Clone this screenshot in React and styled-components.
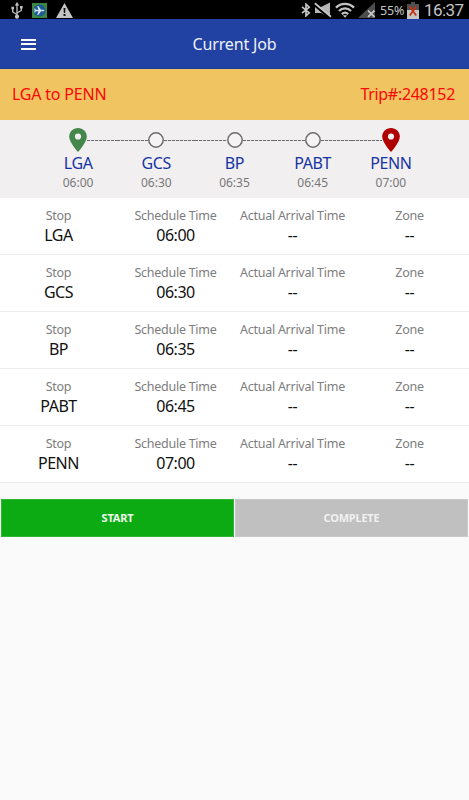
import styled, { createGlobalStyle } from "styled-components";

const GlobalStyle = createGlobalStyle`
  * {
    box-sizing: border-box;
  }
  body {
    margin: 0;
    background-color: #fafafa;
    font-family: "Noto Sans", "Open Sans", sans-serif;
  }
`;

const Screen = styled.div`
  width: 100%;
  min-height: 800px;
  background-color: #fafafa;
`;

const StatusBar = styled.div`
  display: flex;
  justify-content: space-between;
  height: 19px;
  background-color: black;
  color: #c4c4c4;
`;

const StatusGroup = styled.div`
  display: flex;
  align-items: center;
  padding: ${props => props.$padding};
  gap: ${props => props.$gap || "0"};

  svg {
    display: block;
    flex: none;
  }
`;

const Battery = styled.span`
  width: 27px;
  font-size: 12.5px;
  line-height: 19px;
  letter-spacing: -0.1px;
  white-space: nowrap;
`;

const Clock = styled.span`
  width: 41px;
  margin-left: 5px;
  font-family: Roboto, sans-serif;
  font-size: 17px;
  line-height: 19px;
  letter-spacing: -0.6px;
  white-space: nowrap;
`;

const Header = styled.header`
  display: grid;
  grid-template-columns: 56px 1fr 56px;
  align-items: center;
  height: 50px;
  background-color: #2142a2;
  border-bottom: 1px solid #1b3996;
`;

const MenuBtn = styled.button`
  display: flex;
  flex-direction: column;
  gap: 2.5px;
  width: 15px;
  margin-left: 21px;
  padding: 1px 0 0;
  border: none;
  background: none;
`;

const MenuLine = styled.span`
  height: 2px;
  background-color: white;
`;

const Title = styled.h1`
  margin: 0;
  color: #eef1fa;
  font-size: 16px;
  font-weight: 400;
  line-height: 20px;
  letter-spacing: -0.15px;
  text-align: center;
`;

const TripBar = styled.div`
  display: flex;
  align-items: center;
  justify-content: space-between;
  height: 51px;
  padding: 0 14px 1px 12px;
  background-color: #f0c561;
  color: #fb0707;
  font-size: 16px;
  line-height: 20px;
`;

const TripText = styled.span`
  letter-spacing: ${props => props.$spacing};
`;

const Timeline = styled.div`
  display: grid;
  grid-template-columns: repeat(5, 1fr);
  height: 78px;
  padding: 7px 39px 0;
  background-color: #f2eff1;
`;

const Station = styled.div`
  display: flex;
  flex-direction: column;
  align-items: center;
`;

const Track = styled.div`
  display: flex;
  align-items: center;
  justify-content: center;
  width: 100%;
  height: 26px;

  svg {
    display: block;
    flex: none;
  }
`;

const Dashes = styled.span`
  flex: 1;
  height: 1px;
  background: ${props => props.$hidden ? "none" : "repeating-linear-gradient(to right, #6c6c6c 0 3px, #dcdadb 3px 4px)"};
`;

const StationName = styled.span`
  color: #1434a4;
  font-size: 16px;
  line-height: 20px;
  letter-spacing: -0.4px;
`;

const StationTime = styled.span`
  margin-top: 1px;
  color: #777;
  font-size: 12px;
  line-height: 17px;
`;

const StopRow = styled.div`
  display: grid;
  grid-template-columns: repeat(4, 1fr);
  height: 57px;
  padding: 9px 1px 0 0;
  background-color: white;
  border-bottom: 1px solid #ebebeb;
`;

const Cell = styled.div`
  display: flex;
  flex-direction: column;
  align-items: center;
  white-space: nowrap;
`;

const Label = styled.span`
  color: #7d7d7d;
  font-size: 12.5px;
  line-height: 18px;
  letter-spacing: -0.27px;
`;

const Value = styled.span`
  color: #111;
  font-size: 16px;
  line-height: 20px;
  letter-spacing: -0.5px;
`;

const Actions = styled.div`
  display: grid;
  grid-template-columns: 1fr 1fr;
  gap: 1px;
  margin-top: 16px;
  padding: 0 1px;
`;

const ActionBtn = styled.button`
  height: 38px;
  padding: 0 0 2px;
  border: 1px solid ${props => props.$edge};
  background-color: ${props => props.$color};
  color: ${props => props.$text};
  font-family: inherit;
  font-size: 11px;
  font-weight: 700;
  letter-spacing: -0.2px;
`;

const stops = [
  { name: "LGA", time: "06:00" },
  { name: "GCS", time: "06:30" },
  { name: "BP", time: "06:35" },
  { name: "PABT", time: "06:45" },
  { name: "PENN", time: "07:00" },
];

function UsbIcon() {
  return (
    <svg width="12" height="17" viewBox="0 0 12 17" fill="none" stroke="#c4c4c4" strokeWidth="1.3">
      <path d="M6 3v11M6 12.5L1.7 10V6.5M6 11l4.300-2.500V5.500" />
      <path d="M6 0l2.200 3.600H3.800zM.4 4.800h2.600v2.400H.4zM9 4h2.600v2.400H9z" fill="#c4c4c4" stroke="none" />
      <circle cx="6" cy="14.7" r="2.1" fill="#c4c4c4" stroke="none" />
    </svg>
  );
}

function PlaneIcon() {
  return (
    <svg width="15" height="15" viewBox="0 0 15 15">
      <path d="M0 0h15v15H0z" fill="#3c8640" />
      <circle cx="7.5" cy="7.5" r="6" fill="#195a98" />
      <path d="M12.4 7.5c0-.6-.6-.8-1.4-.8H9L6.3 3H5.2l1.2 3.7H4L3 5.4h-.9l.6 2.1-.6 2.1H3l1-1.3h2.4L5.2 12h1.1L9 8.300h2c.8 0 1.400-.2 1.400-.8z" fill="#d7e3e8" />
    </svg>
  );
}

function WarningIcon() {
  return (
    <svg width="17" height="15" viewBox="0 0 17 15">
      <path d="M8.5 0L17 15H0z" fill="#c4c4c4" />
      <path d="M7.5 5h2l-.4 5H7.900zM7.500 11h2v2h-2z" fill="#111" />
    </svg>
  );
}

function BluetoothIcon() {
  return (
    <svg width="10" height="14" viewBox="0 0 10 14" fill="none" stroke="#c4c4c4" strokeWidth="1.7">
      <path d="M1 3.8l7.2 6L5 12.800V1.200l3.200 3L1 10.200" />
    </svg>
  );
}

function MuteIcon() {
  return (
    <svg width="18" height="16" viewBox="0 0 18 16">
      <path d="M1 5h6l9-4.5v15L7 11H1z" fill="#b5b5b5" />
      <path d="M0 2.6L16.5 16.3" stroke="black" strokeWidth="2.6" />
      <path d="M.8 1.2L17 14.8" stroke="#c4c4c4" strokeWidth="1.8" />
    </svg>
  );
}

function WifiIcon() {
  return (
    <svg width="20" height="16" viewBox="0 0 20 16" fill="none" stroke="#c4c4c4" strokeWidth="2.3">
      <path d="M1 5.6c5-5 13-5 18 0M4 9c3.400-3.400 8.600-3.400 12 0M6.800 12.100c1.900-1.700 4.500-1.700 6.400 0" />
      <path d="M7.8 13.3h4.4L10 15.800z" fill="#c4c4c4" stroke="none" />
    </svg>
  );
}

function SignalIcon() {
  return (
    <svg width="18" height="16" viewBox="0 0 18 16">
      <path d="M17 0v16H0z" fill="#4d4d4d" />
      <path d="M10 8.5l6.5 6.5M16.5 8.5L10 15" stroke="#222" strokeWidth="2.8" />
      <path d="M10 8.5l6.5 6.5M16.5 8.5L10 15" stroke="#c4c4c4" strokeWidth="2" />
    </svg>
  );
}

function BatteryIcon() {
  return (
    <svg width="12" height="17" viewBox="0 0 12 17">
      <path d="M4 0h4v2h4v6H0V2h4z" fill="#505050" />
      <path d="M0 8h12v9H0z" fill="#c4c4c4" />
      <path d="M2.8 4.5l6.4 9M9.2 4.5l-6.4 9" stroke="#c8300f" strokeWidth="1.8" />
    </svg>
  );
}

function PinIcon({ color }) {
  return (
    <svg width="18" height="24" viewBox="0 0 18 24">
      <path d="M9 0C4 0 .2 3.7.2 8.5.2 14.5 9 24 9 24s8.800-9.500 8.800-15.500C17.800 3.700 14 0 9 0z" fill={color} />
      <circle cx="9" cy="8.5" r="3.1" fill="#f2eff1" />
    </svg>
  );
}

function CircleIcon() {
  return (
    <svg width="16" height="16" viewBox="0 0 16 16">
      <circle cx="8" cy="8" r="7.2" fill="#f5f3f4" stroke="#6c6c6c" strokeWidth="1.5" />
    </svg>
  );
}

function Marker({ index }) {
  if (index === 0) return <PinIcon color="#43884a" />;
  if (index === stops.length - 1) return <PinIcon color="#ae0000" />;
  return <CircleIcon />;
}

function StopField({ label, value }) {
  return (
    <Cell>
      <Label>{label}</Label>
      <Value>{value}</Value>
    </Cell>
  );
}

function App() {
  return (
    <Screen>
      <GlobalStyle />
      <StatusBar>
        <StatusGroup $padding="1px 0 0 11px" $gap="9px">
          <UsbIcon />
          <PlaneIcon />
          <WarningIcon />
        </StatusGroup>
        <StatusGroup $padding="1px 4px 0 0">
          <StatusGroup $padding="0 4px 0 0" $gap="3px">
            <BluetoothIcon />
            <MuteIcon />
            <WifiIcon />
            <SignalIcon />
          </StatusGroup>
          <Battery>55%</Battery>
          <BatteryIcon />
          <Clock>16:37</Clock>
        </StatusGroup>
      </StatusBar>
      <Header>
        <MenuBtn aria-label="Menu">
          <MenuLine />
          <MenuLine />
          <MenuLine />
        </MenuBtn>
        <Title>Current Job</Title>
      </Header>
      <TripBar>
        <TripText $spacing="-0.2px">LGA to PENN</TripText>
        <TripText $spacing="-0.3px">Trip#:248152</TripText>
      </TripBar>
      <Timeline>
        {stops.map((stop, index) => (
          <Station key={stop.name}>
            <Track>
              <Dashes $hidden={index === 0} />
              <Marker index={index} />
              <Dashes $hidden={index === stops.length - 1} />
            </Track>
            <StationName>{stop.name}</StationName>
            <StationTime>{stop.time}</StationTime>
          </Station>
        ))}
      </Timeline>
      {stops.map(stop => (
        <StopRow key={stop.name}>
          <StopField label="Stop" value={stop.name} />
          <StopField label="Schedule Time" value={stop.time} />
          <StopField label="Actual Arrival Time" value="--" />
          <StopField label="Zone" value="--" />
        </StopRow>
      ))}
      <Actions>
        <ActionBtn $color="#0dab13" $edge="#2fb634" $text="#eefaee">START</ActionBtn>
        <ActionBtn $color="#c0c0c0" $edge="#c9c9c9" $text="#f1f1f1">COMPLETE</ActionBtn>
      </Actions>
    </Screen>
  );
}

export default App;
